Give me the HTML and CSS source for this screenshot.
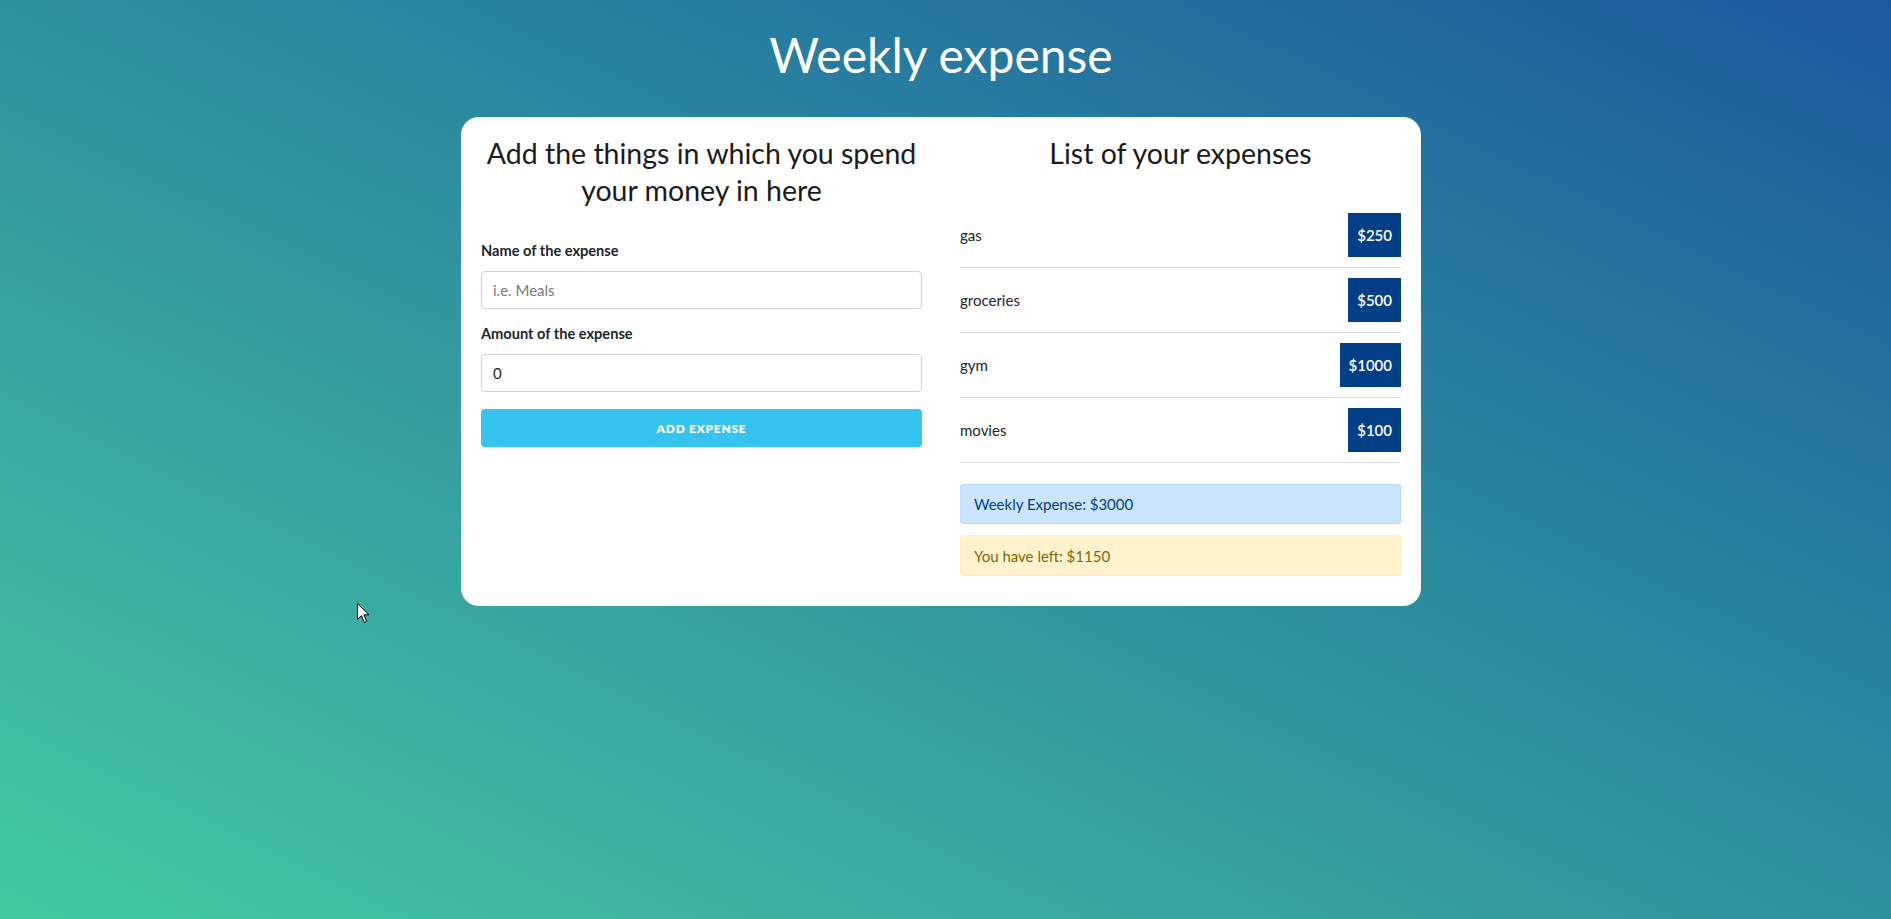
FILE: index.html
```html
<!DOCTYPE html>
<html lang="en">
<head>
<meta charset="utf-8">
<title>Weekly expense</title>
<link rel="stylesheet" href="styles.css">
</head>
<body>
  <h1 class="page-title">Weekly expense</h1>
  <main class="card">
    <section class="col">
      <h2 class="col-title">Add the things in which you spend your money in here</h2>
      <form class="expense-form">
        <label class="field-label" for="name">Name of the expense</label>
        <input class="field-input" id="name" type="text" placeholder="i.e. Meals">
        <label class="field-label second" for="amount">Amount of the expense</label>
        <input class="field-input" id="amount" type="text" value="0">
        <button class="add-btn" type="button">Add expense</button>
      </form>
    </section>
    <section class="col">
      <h2 class="col-title">List of your expenses</h2>
      <ul class="expense-list">
        <li class="expense-item"><span class="expense-name">gas</span><span class="expense-amount">$250</span></li>
        <li class="expense-item"><span class="expense-name">groceries</span><span class="expense-amount">$500</span></li>
        <li class="expense-item"><span class="expense-name">gym</span><span class="expense-amount">$1000</span></li>
        <li class="expense-item"><span class="expense-name">movies</span><span class="expense-amount">$100</span></li>
      </ul>
      <div class="alert alert-primary">Weekly Expense: $3000</div>
      <div class="alert alert-warning">You have left: $1150</div>
    </section>
  </main>
  <svg class="cursor" width="13" height="21" viewBox="0 0 13 21" aria-hidden="true">
    <path d="M0.5 0.5 L0.5 16.5 L4.5 12.7 L7.3 19.5 L9.6 18.5 L6.9 11.8 L12 11.8 Z" fill="#fff" stroke="#000" stroke-width="1"/>
  </svg>
</body>
</html>
```

FILE: styles.css
```css
* { box-sizing: border-box; }

html, body { height: 100%; }

body {
  margin: 0;
  padding-right: 9px;
  min-height: 100vh;
  font-family: Lato, "Open Sans", sans-serif;
  color: #212529;
  background: linear-gradient(to top right, #43c9a1, #1a5a9e);
  position: relative;
}

.page-title {
  margin: 24px 0 0;
  font-size: 48px;
  line-height: 62px;
  font-weight: 400;
  text-align: center;
  color: #fff;
}

.card {
  width: 960px;
  margin: 31px auto 0;
  background: #fff;
  border-radius: 18px;
  padding: 18px 20px 30px;
  display: grid;
  grid-template-columns: 1fr 1fr;
  column-gap: 38px;
  align-items: start;
}

.col-title {
  margin: 0;
  font-size: 28.5px;
  line-height: 37px;
  font-weight: 400;
  text-align: center;
  color: #1b1b1b;
}

.expense-form {
  display: flex;
  flex-direction: column;
  margin-top: 32px;
}

.field-label {
  font-size: 14.6px;
  line-height: 20px;
  font-weight: 700;
  color: #212529;
  margin-bottom: 10px;
}

.field-label.second { margin-top: 15px; }

.field-input {
  height: 38px;
  border: 1px solid #cfd2d6;
  border-radius: 4px;
  padding: 0 11px;
  font-family: Lato, sans-serif;
  font-size: 15px;
  color: #212529;
  background: #fff;
}

.field-input::placeholder { color: #7a7a7a; }

.add-btn {
  margin-top: 17px;
  height: 38px;
  border: none;
  border-radius: 4px;
  background: #35c3f0;
  color: #fff;
  font-family: Lato, sans-serif;
  font-size: 12px;
  font-weight: 800;
  letter-spacing: 0.7px;
  text-transform: uppercase;
}

.expense-list {
  list-style: none;
  margin: 31px 0 0;
  padding: 0;
}

.expense-item {
  display: flex;
  justify-content: space-between;
  align-items: center;
  padding: 10px 0;
  border-bottom: 1px solid #dcdcdc;
}

.expense-name {
  font-size: 15px;
  color: #212529;
}

.expense-amount {
  height: 44px;
  display: flex;
  align-items: center;
  padding: 0 9px;
  background: #023f87;
  color: #fff;
  font-size: 15px;
  font-weight: 600;
}

.alert {
  border: 1px solid transparent;
  border-radius: 3px;
  padding: 0 13px;
  height: 40px;
  display: flex;
  align-items: center;
  font-size: 15px;
}

.alert-primary {
  margin-top: 21px;
  background: #cce5ff;
  border-color: #b8daff;
  color: #004085;
}

.alert-warning {
  margin-top: 11px;
  height: 41px;
  background: #fff3cd;
  border-color: #ffeeba;
  color: #856404;
}

.cursor {
  position: absolute;
  left: 357px;
  top: 603px;
}
```
